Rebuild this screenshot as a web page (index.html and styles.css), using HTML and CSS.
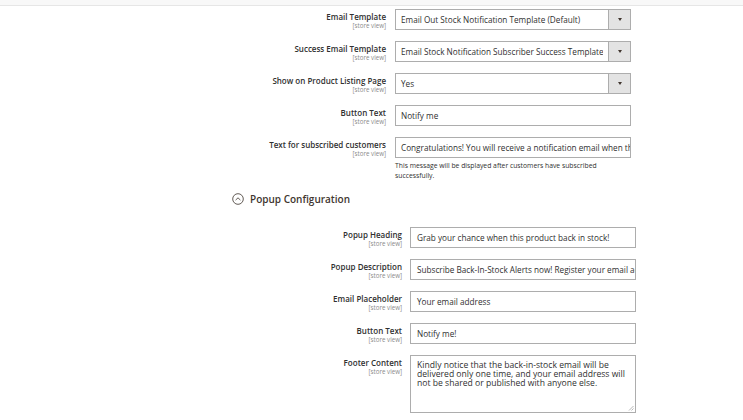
FILE: index.html
```html
<!DOCTYPE html>
<html>
<head>
<meta charset="utf-8">
<link rel="stylesheet" href="styles.css">
</head>
<body>
<div class="topbar"></div>
<div class="section first">
  <div class="row">
    <div class="label"><span class="name">Email Template</span><span class="scope">[store view]</span></div>
    <div class="control"><div class="select"><span class="val">Email Out Stock Notification Template (Default)</span><span class="arrow"></span></div></div>
  </div>
  <div class="row">
    <div class="label"><span class="name">Success Email Template</span><span class="scope">[store view]</span></div>
    <div class="control"><div class="select"><span class="val">Email Stock Notification Subscriber Success Template (Default)</span><span class="arrow"></span></div></div>
  </div>
  <div class="row">
    <div class="label"><span class="name">Show on Product Listing Page</span><span class="scope">[store view]</span></div>
    <div class="control"><div class="select"><span class="val">Yes</span><span class="arrow"></span></div></div>
  </div>
  <div class="row">
    <div class="label"><span class="name">Button Text</span><span class="scope">[store view]</span></div>
    <div class="control"><div class="input">Notify me</div></div>
  </div>
  <div class="row">
    <div class="label"><span class="name">Text for subscribed customers</span><span class="scope">[store view]</span></div>
    <div class="control"><div class="input">Congratulations! You will receive a notification email when the product is back in stock.</div>
      <div class="note">This message will be displayed after customers have subscribed successfully.</div></div>
  </div>
</div>
<div class="group-title">
  <svg class="toggle" width="12" height="12" viewBox="0 0 12 12"><circle cx="6" cy="6" r="5.3" fill="none" stroke="#514943" stroke-width="0.9"/><path d="M3.6 7.1 L6 4.8 L8.4 7.1" fill="none" stroke="#514943" stroke-width="0.9"/></svg>
  <span>Popup Configuration</span>
</div>
<div class="section second">
  <div class="row">
    <div class="label"><span class="name">Popup Heading</span><span class="scope">[store view]</span></div>
    <div class="control"><div class="input">Grab your chance when this product back in stock!</div></div>
  </div>
  <div class="row">
    <div class="label"><span class="name">Popup Description</span><span class="scope">[store view]</span></div>
    <div class="control"><div class="input">Subscribe Back-In-Stock Alerts now! Register your email address to be the first to know</div></div>
  </div>
  <div class="row">
    <div class="label"><span class="name">Email Placeholder</span><span class="scope">[store view]</span></div>
    <div class="control"><div class="input">Your email address</div></div>
  </div>
  <div class="row">
    <div class="label"><span class="name">Button Text</span><span class="scope">[store view]</span></div>
    <div class="control"><div class="input">Notify me!</div></div>
  </div>
  <div class="row">
    <div class="label"><span class="name">Footer Content</span><span class="scope">[store view]</span></div>
    <div class="control"><div class="textarea">Kindly notice that the back-in-stock email will be delivered only one time, and your email address will not be shared or published with anyone else.<svg class="grip" width="6" height="6" viewBox="0 0 6 6"><path d="M5.5 1 L1 5.5 M5.5 3.5 L3.5 5.5" stroke="#9a9a9a" stroke-width="0.7"/></svg></div></div>
  </div>
</div>
</body>
</html>
```

FILE: styles.css
```css
html, body {
  margin: 0;
  padding: 0;
  background: #ffffff;
}
body {
  font-family: "Open Sans", "Liberation Sans", sans-serif;
  color: #303030;
  width: 743px;
  height: 420px;
  overflow: hidden;
}
.topbar {
  height: 5px;
  background: #f8f8f8;
  border-bottom: 1px solid #e6e6e6;
}
.section {
  display: flex;
  flex-direction: column;
}
.section.first {
  padding-top: 3px;
}
.row {
  display: grid;
  margin-bottom: 11px;
}
.first .row {
  grid-template-columns: 386px 236px;
  column-gap: 9px;
}
.second .row {
  grid-template-columns: 402px 226px;
  column-gap: 8px;
}
.label {
  display: flex;
  flex-direction: column;
  align-items: flex-end;
  padding-top: 2px;
}
.name {
  font-size: 8px;
  font-weight: 600;
  line-height: 11px;
  color: #303030;
  white-space: nowrap;
}
.scope {
  font-size: 6.2px;
  line-height: 8px;
  color: #8a8a8a;
}
.control {
  min-width: 0;
}
.select, .input, .textarea {
  box-sizing: border-box;
  border: 1px solid #adadad;
  background: #fff;
  font-size: 8.2px;
  color: #303030;
}
.select {
  height: 21px;
  display: flex;
  align-items: center;
}
.select .val {
  flex: 1;
  min-width: 0;
  overflow: hidden;
  white-space: nowrap;
  padding-left: 5px;
  margin-right: 5px;
  line-height: 19px;
}
.select .arrow {
  width: 21px;
  height: 19px;
  background: #e3e3e3;
  border-left: 1px solid #adadad;
  display: flex;
  align-items: center;
  justify-content: center;
  flex: none;
}
.select .arrow::after {
  content: "";
  border-left: 2.5px solid transparent;
  border-right: 2.5px solid transparent;
  border-top: 3px solid #41362f;
}
.input {
  height: 21px;
  line-height: 19px;
  padding: 0 5px;
  white-space: nowrap;
  overflow: hidden;
}
.second .input {
  padding: 0 6px;
}
.note {
  font-size: 6.8px;
  line-height: 9.5px;
  margin-top: 3px;
  color: #303030;
  padding-right: 10px;
}
.group-title {
  display: flex;
  align-items: center;
  gap: 6px;
  padding-left: 232px;
  margin-top: 1px;
  margin-bottom: 21px;
  font-size: 10px;
  font-weight: 600;
  color: #41362f;
  height: 14px;
}
.toggle {
  flex: none;
}
.textarea {
  position: relative;
  height: 58px;
  padding: 5px 3px 2px 6px;
  font-size: 8.6px;
  line-height: 9px;
}
.grip {
  position: absolute;
  right: 1px;
  bottom: 1px;
}
```
